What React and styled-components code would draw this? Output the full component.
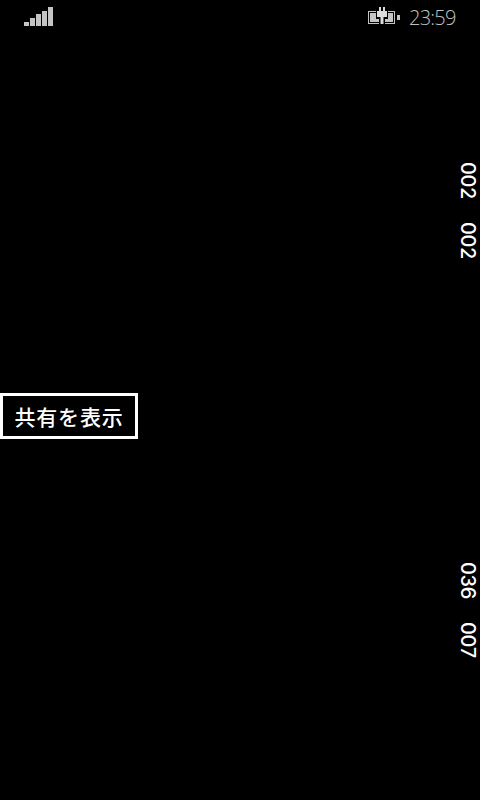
import React from 'react';
import styled, { createGlobalStyle } from 'styled-components';

const GlobalStyle = createGlobalStyle`
	html, body {
		margin: 0;
		padding: 0;
		background: #000;
	}
`;

const Page = styled.div`
	width: 480px;
	height: 800px;
	background: #000;
	color: #fff;
	overflow: hidden;
	font-family: 'Open Sans', 'Noto Sans CJK JP', sans-serif;
`;

const StatusBar = styled.div`
	height: 36px;
	display: flex;
	align-items: flex-start;
	justify-content: space-between;
	padding: 0 24px;
`;

const StatusRight = styled.div`
	display: flex;
	align-items: flex-start;
	gap: 9px;
	height: 36px;
`;

const Clock = styled.div`
	width: 47px;
	font-size: 20px;
	font-weight: 300;
	line-height: 36px;
	letter-spacing: -0.75px;
	color: #c0c0c0;
	white-space: nowrap;
`;

const SignalIcon = styled.svg`
	display: block;
	margin-top: 6px;
`;

const BatteryIcon = styled.svg`
	display: block;
	margin-top: 6px;
`;

const Content = styled.div`
	height: 764px;
	display: flex;
	justify-content: space-between;
`;

const ShareButton = styled.div`
	align-self: flex-start;
	margin-top: 357px;
	width: 138px;
	height: 46px;
	box-sizing: border-box;
	border: 3px solid #fff;
	display: flex;
	align-items: center;
	justify-content: center;
	font-family: 'Noto Sans CJK JP', sans-serif;
	font-size: 21px;
	font-weight: 500;
	letter-spacing: 0.8px;
	white-space: nowrap;
`;

const CounterRail = styled.div`
	width: 22px;
	margin-right: 1px;
	padding-top: 126px;
	display: flex;
	flex-direction: column;
	gap: 304px;
`;

const CounterGroup = styled.div`
	display: flex;
	flex-direction: column;
	gap: 24px;
`;

const Counter = styled.div`
	writing-mode: vertical-rl;
	font-family: Inter, 'Open Sans', sans-serif;
	font-size: 20px;
	font-weight: 500;
	line-height: 22px;
	letter-spacing: -0.4px;
	height: 36px;
	white-space: nowrap;
`;

const Signal = () => (
	<SignalIcon width="30" height="20" viewBox="0 0 30 20" fill="#c4c4c4">
		<rect x="0" y="16" width="5" height="4" />
		<rect x="6" y="12" width="5" height="8" />
		<rect x="12" y="8" width="5" height="12" />
		<rect x="18" y="5" width="5" height="15" />
		<rect x="24" y="1" width="5" height="19" />
	</SignalIcon>
);

const Battery = () => (
	<BatteryIcon width="32" height="20" viewBox="0 0 32 20" fill="none">
		<rect x="0.5" y="5.500" width="26" height="12" stroke="#c4c4c4" strokeWidth="1" />
		<rect x="2" y="7" width="23" height="9" fill="#c4c4c4" />
		<rect x="29" y="9" width="3" height="5" fill="#c4c4c4" />
		<rect x="8" y="4" width="12" height="9" fill="#000" />
		<rect x="11" y="13" width="6" height="6" fill="#000" />
		<g fill="#dcdcdc">
			<rect x="11" y="1" width="2" height="4" />
			<rect x="15" y="1" width="2" height="4" />
			<rect x="9" y="5" width="10" height="6" />
			<rect x="12.500" y="11" width="3" height="7" />
		</g>
	</BatteryIcon>
);

const App = () => {
	return (
		<Page>
			<GlobalStyle />
			<StatusBar>
				<Signal />
				<StatusRight>
					<Battery />
					<Clock>23:59</Clock>
				</StatusRight>
			</StatusBar>
			<Content>
				<ShareButton>共有を表示</ShareButton>
				<CounterRail>
					<CounterGroup>
						<Counter>002</Counter>
						<Counter>002</Counter>
					</CounterGroup>
					<CounterGroup>
						<Counter>036</Counter>
						<Counter>007</Counter>
					</CounterGroup>
				</CounterRail>
			</Content>
		</Page>
	);
};

export default App;
